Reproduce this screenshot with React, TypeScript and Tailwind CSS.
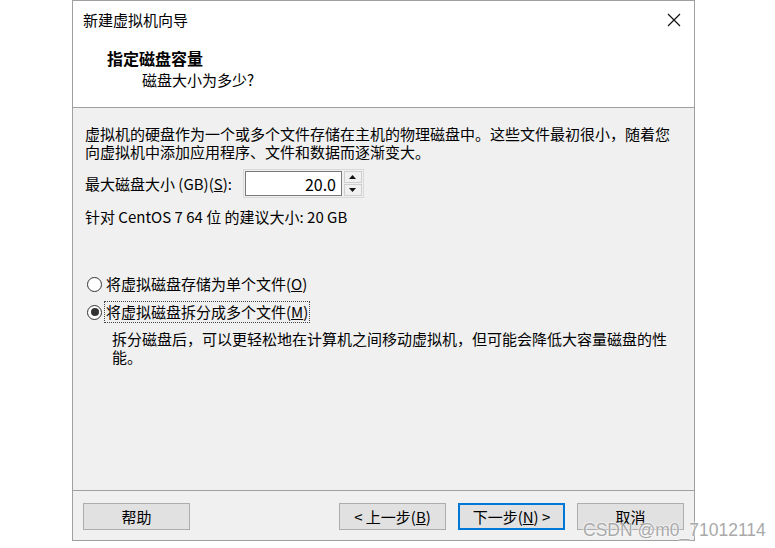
import React from 'react';

const font = { fontFamily: '"Noto Sans CJK SC", "Noto Sans", sans-serif' };

function Radio({ checked }: { checked?: boolean }) {
  return (
    <span className="flex h-[15px] w-[15px] shrink-0 items-center justify-center rounded-full border border-[#333333] bg-white">
      {checked && <span className="h-[8px] w-[8px] rounded-full bg-[#333333]" />}
    </span>
  );
}

function WinButton({ children, primary }: { children: React.ReactNode; primary?: boolean }) {
  return (
    <div
      className={
        'flex h-[27px] w-[107px] items-center justify-center bg-[#e1e1e1] text-[15px] leading-none text-black ' +
        (primary ? 'border-2 border-[#0078d7]' : 'border border-[#adadad]')
      }
    >
      {children}
    </div>
  );
}

export default function App() {
  return (
    <div className="relative h-[548px] w-[775px] bg-white text-black" style={font}>
      <div className="ml-[72px] flex h-[541px] w-[623px] flex-col border border-[#a0a0a0]">
        {/* title bar + header */}
        <div className="bg-white">
          <div className="flex h-[38px] items-center justify-between pl-[10px] pr-[12px]">
            <span className="text-[15px] leading-[20px]">新建虚拟机向导</span>
            <svg width="14" height="14" viewBox="0 0 14 14" className="mr-[1px]">
              <path d="M1 1 L13 13 M13 1 L1 13" stroke="#111" strokeWidth="1.2" />
            </svg>
          </div>
          <div className="h-[69px] border-b border-[#a0a0a0] pl-[34px] pt-[9px]">
            <div className="text-[16px] font-bold leading-[20px]">指定磁盘容量</div>
            <div className="mt-[2px] pl-[35px] text-[15px] leading-[20px]">磁盘大小为多少?</div>
          </div>
        </div>

        {/* body */}
        <div className="flex-1 bg-[#f0f0f0] pl-[12px] pt-[17px] text-[15px] leading-[18px]">
          <p>
            虚拟机的硬盘作为一个或多个文件存储在主机的物理磁盘中。这些文件最初很小，随着您
            <br />
            向虚拟机中添加应用程序、文件和数据而逐渐变大。
          </p>

          <div className="mt-[8px] flex items-center">
            <span>
              最大磁盘大小 (GB)(<span className="underline">S</span>):
            </span>
            <div className="ml-[11px] flex h-[29px] items-center border border-[#d9d9d9] bg-[#f0f0f0] p-[1px]">
              <div className="flex h-full w-[97px] items-center justify-end border border-[#7a7a7a] bg-white pr-[5px] text-[16px]">
                20.0
              </div>
              <div className="ml-[2px] flex h-full w-[18px] flex-col gap-[1px]">
                <div className="flex flex-1 items-center justify-center border border-[#cfcfcf] bg-[#f0f0f0]">
                  <svg width="7" height="4" viewBox="0 0 7 4">
                    <path d="M0 4 L3.5 0 L7 4 Z" fill="#111" />
                  </svg>
                </div>
                <div className="flex flex-1 items-center justify-center border border-[#cfcfcf] bg-[#f0f0f0]">
                  <svg width="7" height="4" viewBox="0 0 7 4">
                    <path d="M0 0 L3.5 4 L7 0 Z" fill="#111" />
                  </svg>
                </div>
              </div>
            </div>
          </div>

          <p className="mt-[10px]">针对 CentOS 7 64 位 的建议大小: 20 GB</p>

          <div className="mt-[46px] flex h-[24px] items-center pl-[2px]">
            <Radio />
            <span className="ml-[2px] border border-transparent px-[1px]">
              将虚拟磁盘存储为单个文件(<span className="underline">O</span>)
            </span>
          </div>
          <div className="mt-[4px] flex h-[24px] items-center pl-[2px]">
            <Radio checked />
            <span className="ml-[2px] border border-dotted border-[#444] px-[1px] leading-[20px]">
              将虚拟磁盘拆分成多个文件(<span className="underline">M</span>)
            </span>
          </div>
          <p className="mt-[6px] pl-[27px]">
            拆分磁盘后，可以更轻松地在计算机之间移动虚拟机，但可能会降低大容量磁盘的性
            <br />
            能。
          </p>
        </div>

        {/* footer */}
        <div className="flex h-[50px] items-start border-t border-[#a0a0a0] bg-[#f0f0f0] pl-[10px] pt-[12px]">
          <WinButton>帮助</WinButton>
          <div className="ml-[149px] flex gap-[12px]">
            <WinButton>
              &lt; 上一步(<span className="underline">B</span>)
            </WinButton>
            <WinButton primary>
              下一步(<span className="underline">N</span>) &gt;
            </WinButton>
            <WinButton>取消</WinButton>
          </div>
        </div>
      </div>

      <div
        className="absolute left-[583px] top-[519px] text-[17.5px] leading-[22px] text-[#a9a9a9]"
        style={{ fontFamily: '"Liberation Sans", Arial, sans-serif', textShadow: '0 0 2px #fff, 0 0 2px #fff' }}
      >
        CSDN @m0_71012114
      </div>
    </div>
  );
}
